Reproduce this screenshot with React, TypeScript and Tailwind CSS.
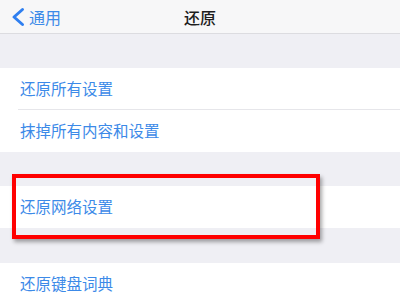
import React from "react";

const font = { fontFamily: '"Noto Sans CJK SC", "Noto Sans", sans-serif' };

function Row({ text, border }: { text: string; border?: boolean }) {
  return (
    <div className="h-[42px] bg-white pl-[20px] flex items-center relative">
      <span className="text-[15.5px] leading-none text-[#3c8ae8]">{text}</span>
      {border && <div className="absolute left-[18px] right-0 bottom-0 h-px bg-[#e6e6ea]" />}
    </div>
  );
}

export default function App() {
  return (
    <div className="w-[400px] h-[300px] overflow-hidden bg-[#efeff4] relative" style={font}>
      <div className="h-[34px] bg-[#f7f7f8] border-b border-[#dcdce0] relative flex items-center">
        <div className="flex items-center pl-[10px]">
          <svg width="16" height="20" viewBox="0 0 16 20">
            <path d="M12.5 2.5 L4 10 L12.5 17.5" fill="none" stroke="#2f7ff0" strokeWidth="3" strokeLinecap="round" strokeLinejoin="round" />
          </svg>
          <span className="ml-[3px] text-[16px] leading-none text-[#3c8ae8]">通用</span>
        </div>
        <div className="absolute left-0 right-0 top-0 bottom-0 flex items-center justify-center">
          <span className="text-[16px] leading-none font-medium text-[#1e1e1e]">还原</span>
        </div>
      </div>
      <div className="h-[34px]" />
      <Row text="还原所有设置" border />
      <Row text="抹掉所有内容和设置" />
      <div className="h-[34px]" />
      <Row text="还原网络设置" />
      <div className="h-[35px]" />
      <Row text="还原键盘词典" />
      <div className="absolute left-[12px] top-[174px] w-[308px] h-[65px] border-[4px] border-[#ff0000] shadow-[2px_3px_4px_rgba(0,0,0,0.35)]" />
    </div>
  );
}
